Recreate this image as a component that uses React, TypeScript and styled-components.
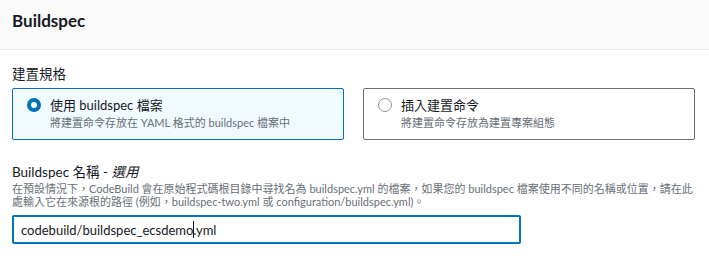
import React from "react";
import styled, { createGlobalStyle } from "styled-components";

const Global = createGlobalStyle`
  html, body { margin: 0; padding: 0; background: #ffffff; }
  body {
    font-family: Lato, "Noto Sans CJK TC", sans-serif;
    color: #16191f;
  }
  * { box-sizing: border-box; }
`;

const Panel = styled.div`
  width: 709px;
  height: 259px;
  overflow: hidden;
  background: #fff;
`;

const Header = styled.div`
  height: 50px;
  background: #fafafa;
  border-bottom: 1px solid #eaeded;
  padding: 10px 12px 0;
`;

const Title = styled.h2`
  margin: 0;
  font-size: 17px;
  line-height: 22px;
  font-weight: 700;
  color: #16191f;
`;

const Body = styled.div`
  padding: 14px 14px 0 12px;
  display: flex;
  flex-direction: column;
`;

const Label = styled.div`
  font-size: 13.5px;
  line-height: 20px;
  color: #16191f;
`;

const Tiles = styled.div`
  margin-top: 4px;
  display: grid;
  grid-template-columns: 1fr 1fr;
  column-gap: 19px;
`;

const Tile = styled.div<{ $selected?: boolean }>`
  border: 1px solid ${(p) => (p.$selected ? "#0073bb" : "#687078")};
  background: ${(p) => (p.$selected ? "#f1faff" : "#ffffff")};
  border-radius: 2px;
  padding: 6px 14px 8px 14px;
  display: flex;
  align-items: flex-start;
  gap: 9px;
`;

const Radio = styled.span<{ $checked?: boolean }>`
  flex: none;
  width: 14px;
  height: 14px;
  margin-top: 3px;
  border-radius: 50%;
  border: ${(p) => (p.$checked ? "4px solid #0073bb" : "1.5px solid #879596")};
  background: #fff;
`;

const TileText = styled.div`
  display: flex;
  flex-direction: column;
`;

const TileTitle = styled.div`
  font-size: 13px;
  line-height: 20px;
  color: #16191f;
`;

const TileDesc = styled.div`
  font-size: 11px;
  line-height: 16px;
  color: #687078;
`;

const Field = styled.div`
  margin-top: 22px;
  display: flex;
  flex-direction: column;
`;

const Desc = styled.div`
  font-size: 11px;
  line-height: 13px;
  color: #687078;
  white-space: nowrap;
`;

const Input = styled.div`
  margin-top: 7px;
  width: 509px;
  height: 29px;
  border: 2px solid #0073bb;
  border-radius: 2px;
  padding: 0 7px;
  display: flex;
  align-items: center;
  font-size: 13px;
  color: #16191f;
`;

const Caret = styled.span`
  display: inline-block;
  width: 1px;
  height: 17px;
  background: #16191f;
  margin-right: -1px;
`;

export default function App() {
  return (
    <Panel>
      <Global />
      <Header>
        <Title>Buildspec</Title>
      </Header>
      <Body>
        <Label>建置規格</Label>
        <Tiles>
          <Tile $selected>
            <Radio $checked />
            <TileText>
              <TileTitle>使用 buildspec 檔案</TileTitle>
              <TileDesc>將建置命令存放在 YAML 格式的 buildspec 檔案中</TileDesc>
            </TileText>
          </Tile>
          <Tile>
            <Radio />
            <TileText>
              <TileTitle>插入建置命令</TileTitle>
              <TileDesc>將建置命令存放為建置專案組態</TileDesc>
            </TileText>
          </Tile>
        </Tiles>
        <Field>
          <Label>
            Buildspec 名稱 - <i>選用</i>
          </Label>
          <Desc>
            在預設情況下，CodeBuild 會在原始程式碼根目錄中尋找名為 buildspec.yml 的檔案，如果您的 buildspec 檔案使用不同的名稱或位置，請在此
            <br />
            處輸入它在來源根的路徑 (例如，buildspec-two.yml 或 configuration/buildspec.yml)。
          </Desc>
          <Input>
            codebuild/buildspec_ecsdemo<Caret />.yml
          </Input>
        </Field>
      </Body>
    </Panel>
  );
}
